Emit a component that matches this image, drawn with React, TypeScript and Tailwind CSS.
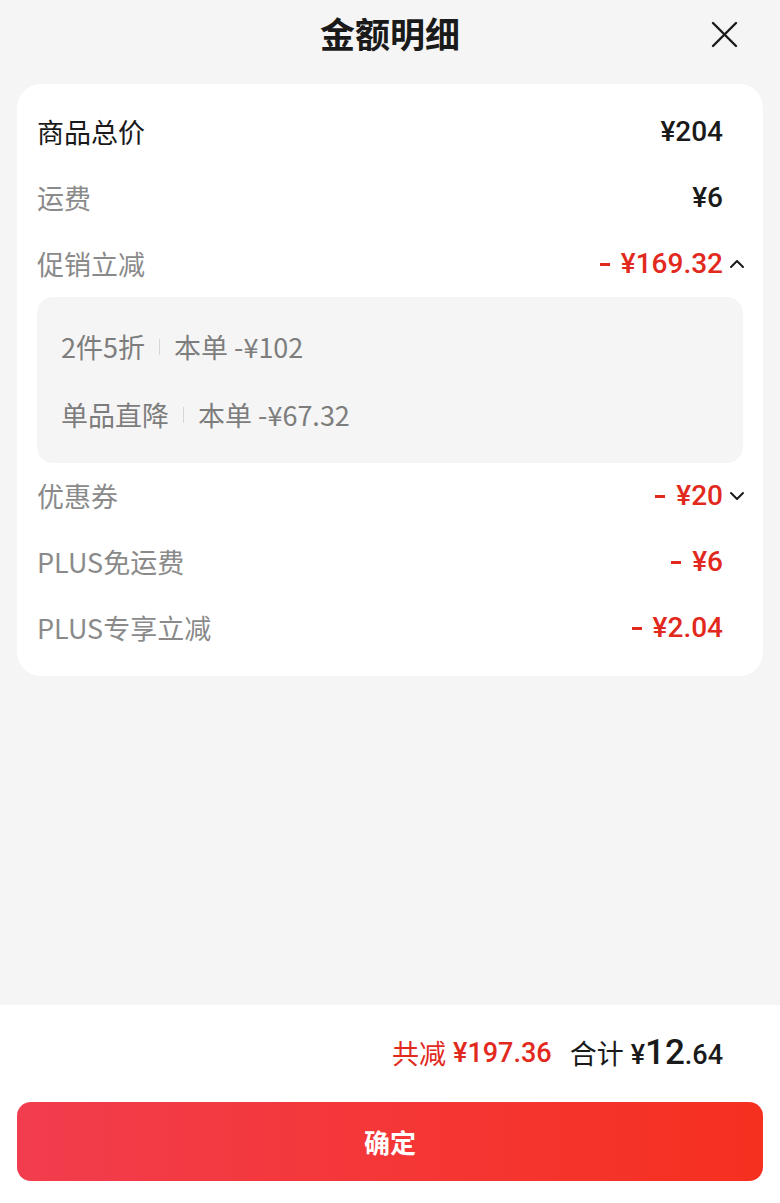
import React from "react";

const CJK = '"Noto Sans CJK SC", "Noto Sans", sans-serif';
const NUM = 'Roboto, "Noto Sans CJK SC", sans-serif';

function Up() {
  return (
    <svg width="16" height="10" viewBox="0 0 16 10" fill="none">
      <polyline points="2,8 8,2 14,8" stroke="#1a1a1a" strokeWidth="2" strokeLinecap="round" strokeLinejoin="round" />
    </svg>
  );
}
function Down() {
  return (
    <svg width="16" height="10" viewBox="0 0 16 10" fill="none">
      <polyline points="2,2 8,8 14,2" stroke="#1a1a1a" strokeWidth="2" strokeLinecap="round" strokeLinejoin="round" />
    </svg>
  );
}

function Row({
  label,
  value,
  labelDark,
  red,
  icon,
}: {
  label: string;
  value: string;
  labelDark?: boolean;
  red?: boolean;
  icon?: React.ReactNode;
}) {
  return (
    <div className="flex h-[66px] items-center pl-5 pr-[18px]">
      <span
        className={`flex-1 text-[27px] ${labelDark ? "text-[#1a1a1a]" : "text-[#8a8a8a]"}`}
        style={{ fontFamily: CJK }}
      >
        {label}
      </span>
      {red ? (
        <span className="flex items-center text-[28px] font-medium text-[#e2291d]" style={{ fontFamily: NUM }}>
          <span className="h-[3px] w-[10px] bg-[#e2291d]" />
          <span className="ml-[11px]">{value}</span>
        </span>
      ) : (
        <span className="text-[28px] font-medium text-[#1a1a1a]" style={{ fontFamily: NUM }}>
          {value}
        </span>
      )}
      <span className="flex w-[22px] items-center justify-end">{icon}</span>
    </div>
  );
}

function SubLine({ name, detail }: { name: string; detail: string }) {
  return (
    <div className="flex h-[68px] items-center text-[27px] text-[#7d7d7d]" style={{ fontFamily: CJK }}>
      <span>{name}</span>
      <span className="mx-[14px] h-[16px] w-px bg-[#d6d6d6]" />
      <span>{detail}</span>
    </div>
  );
}

export default function App() {
  return (
    <div className="flex h-[1203px] w-full flex-col bg-[#f5f5f5]" style={{ fontFamily: CJK }}>
      {/* Header */}
      <div className="relative flex h-[66px] items-center justify-center">
        <span className="text-[35px] font-bold text-[#1a1a1a]">金额明细</span>
        <button className="absolute right-[42px] top-[21px]">
          <svg width="27" height="27" viewBox="0 0 27 27" fill="none">
            <line x1="2" y1="2" x2="25" y2="25" stroke="#1a1a1a" strokeWidth="2.4" strokeLinecap="round" />
            <line x1="25" y1="2" x2="2" y2="25" stroke="#1a1a1a" strokeWidth="2.4" strokeLinecap="round" />
          </svg>
        </button>
      </div>

      {/* Card */}
      <div className="mx-[17px] mt-[18px] rounded-[24px] bg-white pb-[15px] pt-[15px]">
        <Row label="商品总价" value="¥204" labelDark />
        <Row label="运费" value="¥6" />
        <Row label="促销立减" value="¥169.32" red icon={<Up />} />
        <div className="mx-5 rounded-[16px] bg-[#f5f5f5] pb-[14px] pl-6 pt-[16px]">
          <SubLine name="2件5折" detail="本单 -¥102" />
          <SubLine name="单品直降" detail="本单 -¥67.32" />
        </div>
        <Row label="优惠券" value="¥20" red icon={<Down />} />
        <Row label="PLUS免运费" value="¥6" red />
        <Row label="PLUS专享立减" value="¥2.04" red />
      </div>

      <div className="flex-1" />

      {/* Bottom */}
      <div className="bg-white px-[17px] pb-[22px]">
        <div className="flex h-[97px] items-center justify-end pr-[40px]">
          <span className="text-[27px] text-[#e2291d]">共减</span>
          <span className="ml-[7px] text-[27px] font-medium text-[#e2291d]" style={{ fontFamily: NUM }}>
            ¥197.36
          </span>
          <span className="ml-[18px] text-[27px] text-[#1a1a1a]">合计</span>
          <span className="ml-[7px] flex items-baseline text-[#1a1a1a]" style={{ fontFamily: NUM }}>
            <span className="text-[27px] font-medium">¥</span>
            <span className="text-[35px] font-medium">12</span>
            <span className="text-[27px] font-medium">.64</span>
          </span>
        </div>
        <button className="flex h-[79px] w-full items-center justify-center rounded-[14px] bg-[linear-gradient(90deg,#f23d4e_0%,#f6301f_100%)]">
          <span className="text-[26px] font-bold text-white">确定</span>
        </button>
      </div>
    </div>
  );
}
